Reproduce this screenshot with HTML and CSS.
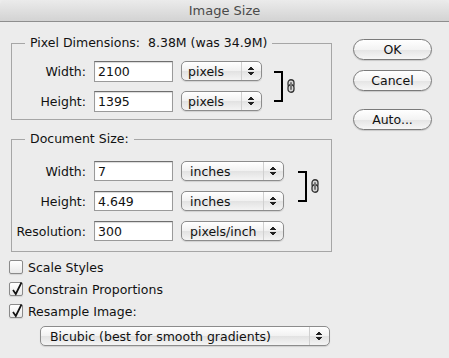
FILE: index.html
```html
<!DOCTYPE html>
<html lang="en">
<head>
    <meta charset="UTF-8">
    <title>Image Size</title>
    <link rel="stylesheet" href="styles.css">
</head>
<body>
    <div class="window">
        <div class="titlebar">Image Size</div>
        <div class="content">
            <div class="main">
                <fieldset class="group pixel-group">
                    <legend>Pixel Dimensions:&nbsp; 8.38M (was 34.9M)</legend>
                    <div class="rows">
                        <label class="field-label">Width:</label>
                        <input class="field" type="text" value="2100">
                        <div class="popup popup-short"><span>pixels</span><span class="arrows"></span></div>
                        <div class="chain">
                            <div class="bracket"></div>
                            <svg class="link-icon" width="8" height="14" viewBox="0 0 8 14">
                                <rect x="1" y="0.75" width="6" height="7.5" rx="3" fill="#d8d8d8" stroke="#333" stroke-width="1.3"/>
                                <rect x="1" y="5.75" width="6" height="7.5" rx="3" fill="#d8d8d8" stroke="#333" stroke-width="1.3"/>
                                <rect x="3" y="3" width="2" height="8" rx="1" fill="#777"/>
                            </svg>
                        </div>
                        <label class="field-label">Height:</label>
                        <input class="field" type="text" value="1395">
                        <div class="popup popup-short"><span>pixels</span><span class="arrows"></span></div>
                    </div>
                </fieldset>

                <fieldset class="group doc-group">
                    <legend>Document Size:</legend>
                    <div class="rows">
                        <label class="field-label">Width:</label>
                        <input class="field" type="text" value="7">
                        <div class="popup popup-wide"><span>inches</span><span class="arrows"></span></div>
                        <div class="chain">
                            <div class="bracket"></div>
                            <svg class="link-icon" width="8" height="14" viewBox="0 0 8 14">
                                <rect x="1" y="0.75" width="6" height="7.5" rx="3" fill="#d8d8d8" stroke="#333" stroke-width="1.3"/>
                                <rect x="1" y="5.75" width="6" height="7.5" rx="3" fill="#d8d8d8" stroke="#333" stroke-width="1.3"/>
                                <rect x="3" y="3" width="2" height="8" rx="1" fill="#777"/>
                            </svg>
                        </div>
                        <label class="field-label">Height:</label>
                        <input class="field" type="text" value="4.649">
                        <div class="popup popup-wide"><span>inches</span><span class="arrows"></span></div>
                        <label class="field-label">Resolution:</label>
                        <input class="field" type="text" value="300">
                        <div class="popup popup-wide"><span>pixels/inch</span><span class="arrows"></span></div>
                    </div>
                </fieldset>

                <div class="options">
                    <div class="check-row">
                        <span class="checkbox"></span>
                        <span>Scale Styles</span>
                    </div>
                    <div class="check-row">
                        <span class="checkbox checked">
                            <svg width="14" height="16" viewBox="0 0 14 16"><path d="M3 9 L5.8 13 L11.5 1.5" fill="none" stroke="#111" stroke-width="1.7"/></svg>
                        </span>
                        <span>Constrain Proportions</span>
                    </div>
                    <div class="check-row">
                        <span class="checkbox checked">
                            <svg width="14" height="16" viewBox="0 0 14 16"><path d="M3 9 L5.8 13 L11.5 1.5" fill="none" stroke="#111" stroke-width="1.7"/></svg>
                        </span>
                        <span>Resample Image:</span>
                    </div>
                    <div class="popup popup-resample"><span>Bicubic (best for smooth gradients)</span><span class="arrows"></span></div>
                </div>
            </div>

            <div class="buttons">
                <button class="btn">OK</button>
                <button class="btn">Cancel</button>
                <button class="btn btn-auto">Auto...</button>
            </div>
        </div>
    </div>
</body>
</html>
```

FILE: styles.css
```css
body{
    margin: 0;
    background-color: #ececec;
    font-family: "DejaVu Sans", "Noto Sans", sans-serif;
    font-size: 12.5px;
    color: #111;
}
.window{
    width: 449px;
    height: 358px;
    background-color: #ececec;
    overflow: hidden;
}
.titlebar{
    height: 21px;
    line-height: 22px;
    font-size: 13px;
    text-align: center;
    color: #4a4a4a;
    background: linear-gradient(#ebebeb, #d3d3d3);
    border-bottom: 1px solid #8e8e8e;
    border-radius: 5px 5px 0 0;
}
.content{
    display: flex;
}
.main{
    width: 322px;
    padding-left: 9px;
    padding-top: 13px;
}
.group{
    margin: 0 0 0 2px;
    border: 1px solid #a6a6a6;
    padding: 0;
    width: 319px;
}
.group legend{
    margin-left: 13px;
    padding: 0 5px;
    line-height: 16px;
}
.pixel-group{
    padding: 10px 0 8px 0;
}
.doc-group{
    margin-top: 11px;
    padding: 14px 0 10px 0;
}
.rows{
    display: grid;
    grid-template-columns: 78px 79px auto 1fr;
    grid-auto-rows: 20px;
    row-gap: 10px;
    align-items: center;
}
.field-label{
    text-align: right;
    padding-right: 4px;
}
.field{
    width: 79px;
    height: 20px;
    box-sizing: border-box;
    margin: 0 0 0 4px;
    border: 1px solid #9a9a9a;
    border-top-color: #6e6e6e;
    background-color: #fff;
    padding: 0 3px;
    font-family: inherit;
    font-size: 12.5px;
    color: #111;
    box-shadow: inset 0 1px 1px rgba(0,0,0,0.15);
}
.pixel-group .field{
    height: 21px;
}
.popup{
    display: flex;
    align-items: center;
    height: 20px;
    box-sizing: border-box;
    margin-left: 12px;
    border: 1px solid #8c8c8c;
    border-radius: 5px;
    background: linear-gradient(#ffffff, #f1f1f1 50%, #e2e2e2 51%, #f4f4f4);
    box-shadow: 0 1px 1px rgba(0,0,0,0.12);
}
.popup span:first-child{
    flex: 1;
    padding-left: 6px;
    white-space: nowrap;
}
.popup-short{
    width: 81px;
}
.popup-wide{
    width: 103px;
}
.popup-wide span:first-child{
    padding-left: 8px;
}
.arrows{
    width: 19px;
    height: 18px;
    border-left: 1px solid #d0d0d0;
    background:
        linear-gradient(to bottom right, transparent 50%, #222 50%) no-repeat 6px 4px / 3px 4px,
        linear-gradient(to bottom left, transparent 50%, #222 50%) no-repeat 9px 4px / 3px 4px,
        linear-gradient(to top right, transparent 50%, #222 50%) no-repeat 6px 10px / 3px 4px,
        linear-gradient(to top left, transparent 50%, #222 50%) no-repeat 9px 10px / 3px 4px;
}
.chain{
    grid-row: 1 / span 2;
    grid-column: 4;
    display: flex;
    align-items: center;
    height: 31px;
    margin-left: 12px;
}
.doc-group .chain{
    margin-left: 14px;
}
.bracket{
    width: 7px;
    height: 27px;
    border: 2px solid #000;
    border-left: none;
}
.link-icon{
    margin-left: 4px;
}
.options{
    padding-top: 4px;
}
.check-row{
    display: flex;
    align-items: center;
    height: 22px;
}
.checkbox{
    position: relative;
    width: 14px;
    height: 14px;
    box-sizing: border-box;
    margin-right: 5px;
    border: 1px solid #8a8a8a;
    border-radius: 2px;
    background: linear-gradient(#ffffff, #e9e9e9);
    box-shadow: 0 1px 1px rgba(0,0,0,0.1);
}
.checkbox svg{
    position: absolute;
    left: 0;
    top: -2px;
}
.popup-resample{
    width: 290px;
    margin: 4px 0 0 31px;
}
.popup-resample span:first-child{
    padding-left: 9px;
}
.buttons{
    display: flex;
    flex-direction: column;
    padding: 17px 0 0 22px;
}
.btn{
    width: 79px;
    height: 21px;
    margin-bottom: 10px;
    border: 1px solid #7a7a7a;
    border-radius: 11px;
    background: linear-gradient(#ffffff, #f3f3f3 50%, #e4e4e4 51%, #f6f6f6);
    box-shadow: 0 1px 1px rgba(0,0,0,0.15);
    font-family: inherit;
    font-size: 12.5px;
    color: #111;
    padding: 0;
}
.btn-auto{
    margin-top: 8px;
}
```
